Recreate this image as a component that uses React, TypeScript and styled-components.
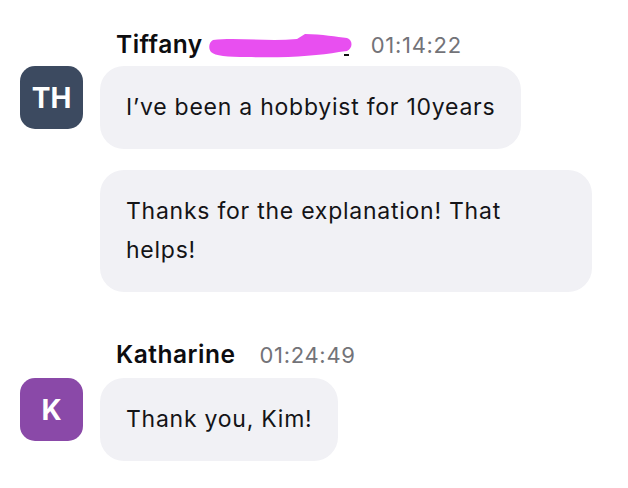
import React from "react";
import styled, { createGlobalStyle } from "styled-components";

const GlobalStyle = createGlobalStyle`
  body {
    margin: 0;
    background: #fff;
    font-family: Inter, "Noto Sans", sans-serif;
    color: #111114;
  }
`;

const Feed = styled.div`
  display: flex;
  flex-direction: column;
  gap: 47px;
  padding: 27px 0 0 20px;
`;

const Group = styled.section`
  display: flex;
  flex-direction: column;
  gap: 9px;
`;

const Header = styled.div`
  display: flex;
  align-items: baseline;
  gap: 24px;
  margin-left: 96px;
  height: 30px;
  line-height: 30px;
`;

const Name = styled.span`
  font-size: 24.5px;
  font-weight: 600;
  letter-spacing: 0.5px;
  color: #0d0d10;
  display: inline-flex;
  align-items: center;
  gap: 4px;
`;

const Time = styled.span`
  font-size: 22px;
  letter-spacing: 0.7px;
  color: #737378;
`;

const Body = styled.div`
  display: flex;
  gap: 17px;
  align-items: flex-start;
`;

const Avatar = styled.div<{ $bg: string }>`
  flex: none;
  width: 63px;
  height: 63px;
  border-radius: 15px;
  background: ${(p) => p.$bg};
  color: #fff;
  font-size: 28px;
  font-weight: 700;
  display: flex;
  align-items: center;
  justify-content: center;
`;

const Bubbles = styled.div`
  display: flex;
  flex-direction: column;
  align-items: flex-start;
  gap: 21px;
`;

const Bubble = styled.div`
  max-width: 440px;
  padding: 22px 26px;
  border-radius: 24px;
  background: #f1f1f5;
  font-size: 23px;
  letter-spacing: 0.75px;
  line-height: 39px;
  color: #141417;
`;

const Redaction = () => (
  <svg width="150" height="30" viewBox="0 0 150 30" style={{ marginTop: 4, marginRight: -10 }}>
    <path
      d="M6 9 C30 6 60 11 90 8 L98 3 C115 3 130 6 140 7 C146 9 146 17 140 20 L132 21 C110 25 80 27 40 26 C20 26 8 25 4 21 C1 17 2 11 6 9 Z"
      fill="#e84ff0"
    />
    <rect x="137" y="23" width="5" height="2" fill="#111" />
  </svg>
);

type Msg = {
  initials: string;
  color: string;
  name: string;
  redacted?: boolean;
  time: string;
  messages: string[];
};

const data: Msg[] = [
  {
    initials: "TH",
    color: "#3c4a60",
    name: "Tiffany",
    redacted: true,
    time: "01:14:22",
    messages: ["I’ve been a hobbyist for 10years", "Thanks for the explanation! That helps!"],
  },
  {
    initials: "K",
    color: "#8a49a8",
    name: "Katharine",
    time: "01:24:49",
    messages: ["Thank you, Kim!"],
  },
];

export default function App() {
  return (
    <>
      <GlobalStyle />
      <Feed>
        {data.map((g) => (
          <Group key={g.time}>
            <Header>
              <Name>
                {g.name}
                {g.redacted && <Redaction />}
              </Name>
              <Time>{g.time}</Time>
            </Header>
            <Body>
              <Avatar $bg={g.color}>{g.initials}</Avatar>
              <Bubbles>
                {g.messages.map((m) => (
                  <Bubble key={m}>{m}</Bubble>
                ))}
              </Bubbles>
            </Body>
          </Group>
        ))}
      </Feed>
    </>
  );
}
